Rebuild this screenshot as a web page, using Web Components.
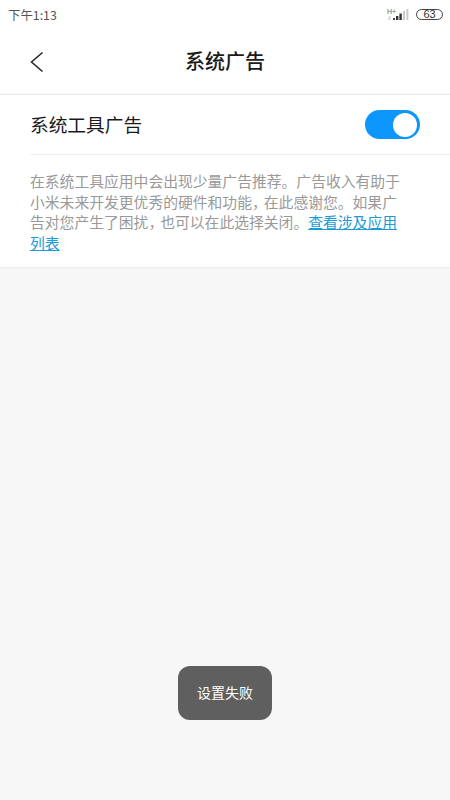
<!DOCTYPE html>
<html lang="zh">
<head>
<meta charset="utf-8">
<title>系统广告</title>
<style>
  html, body { margin: 0; height: 100%; background: #f7f7f7; }
  body { font-family: "Noto Sans CJK SC", "Liberation Sans", sans-serif; }
</style>
</head>
<body>
<ad-screen>
  <status-bar time="下午1:13" battery="63"></status-bar>
  <title-bar>系统广告</title-bar>
  <ad-setting label="系统工具广告">在系统工具应用中会出现少量广告推荐。广告收入有助于<br>小米未来开发更优秀的硬件和功能<span style="letter-spacing:-3px">，</span>在此感谢您。如果广<br>告对您产生了困扰<span style="letter-spacing:-3px">，</span>也可以在此选择关闭。<a href="#">查看涉及应用<br>列表</a></ad-setting>
  <toast-message>设置失败</toast-message>
</ad-screen>

<script>
// page frame, toast sits over it
class AdScreen extends HTMLElement {
  constructor() {
    super();
    this.attachShadow({ mode: 'open' });
    this.shadowRoot.innerHTML = `
      <style>
        :host {
          display: flex;
          flex-direction: column;
          position: relative;
          width: 450px;
          height: 800px;
          overflow: hidden;
          background: #f7f7f7;
        }
      </style>
      <slot></slot>
    `;
  }
}

class StatusBar extends HTMLElement {
  constructor() {
    super();
    this.attachShadow({ mode: 'open' });
  }
  connectedCallback() {
    this.shadowRoot.innerHTML = `
      <style>
        :host {
          display: flex;
          align-items: center;
          justify-content: space-between;
          height: 30px;
          padding: 0 7px 0 8px;
          background: #fff;
          color: #555;
        }
        .time { font-size: 12.4px; line-height: 30px; }
        .right { display: flex; align-items: center; gap: 6px; margin-top: -1px; }
        .batt {
          box-sizing: border-box;
          width: 27px;
          height: 11px;
          border: 1px solid #444;
          border-radius: 5.5px;
          font: 11px/9px "Liberation Sans", sans-serif;
          text-align: center;
          color: #333;
        }
        svg { display: block; }
      </style>
      <span class="time">${this.getAttribute('time')}</span>
      <div class="right">
        <svg width="24" height="16" viewBox="0 0 24 16">
          <text x="1" y="6.5" font-family="Liberation Sans, sans-serif" font-size="7" fill="#666">H+</text>
          <text x="1" y="13" font-family="Liberation Sans, sans-serif" font-size="5" fill="#aaa">.il</text>
          <rect x="7" y="11" width="2" height="2" fill="#444"/>
          <rect x="10" y="9" width="2.4" height="4" fill="#333"/>
          <rect x="13.4" y="6.5" width="2.4" height="6.5" fill="#333"/>
          <rect x="17" y="4" width="2" height="9" fill="#ccc"/>
          <rect x="20.4" y="2" width="2" height="11" fill="#ccc"/>
        </svg>
        <span class="batt">${this.getAttribute('battery')}</span>
      </div>
    `;
  }
}

class TitleBar extends HTMLElement {
  constructor() {
    super();
    this.attachShadow({ mode: 'open' });
    this.shadowRoot.innerHTML = `
      <style>
        :host {
          display: grid;
          grid-template-columns: 75px 1fr 75px;
          align-items: center;
          box-sizing: border-box;
          height: 65px;
          background: #fff;
          border-bottom: 1px solid #e6e6e6;
        }
        .back { padding-left: 30px; height: 22px; margin-top: -1px; }
        svg { display: block; }
        .title {
          text-align: center;
          font-size: 20px;
          line-height: 24px;
          font-weight: 500;
          color: #1a1a1a;
          padding-bottom: 3px;
        }
      </style>
      <div class="back">
        <svg width="14" height="22" viewBox="0 0 14 22" fill="none">
          <path d="M12.5 1.5 L1.5 11 L12.5 20.5" stroke="#222" stroke-width="1.5"/>
        </svg>
      </div>
      <div class="title"><slot></slot></div>
      <div></div>
    `;
  }
}

class ToggleSwitch extends HTMLElement {
  constructor() {
    super();
    this.attachShadow({ mode: 'open' });
    this.shadowRoot.innerHTML = `
      <style>
        :host {
          display: flex;
          justify-content: flex-end;
          align-items: center;
          box-sizing: border-box;
          width: 55px;
          height: 29px;
          padding: 2px 3px;
          border-radius: 15px;
          background: #0d96fb;
        }
        i { display: block; width: 24px; height: 24px; border-radius: 50%; background: #fff; }
      </style>
      <i></i>
    `;
  }
}

class AdSetting extends HTMLElement {
  constructor() {
    super();
    this.attachShadow({ mode: 'open' });
  }
  connectedCallback() {
    this.shadowRoot.innerHTML = `
      <style>
        :host {
          display: block;
          background: #fff;
          border-bottom: 1px solid #eeeeee;
        }
        .row {
          display: flex;
          align-items: center;
          justify-content: space-between;
          box-sizing: border-box;
          height: 60px;
          margin-left: 30px;
          padding-right: 30px;
          border-bottom: 1px solid #efefef;
        }
        .label { font-size: 18.7px; line-height: 24px; color: #1a1a1a; padding-bottom: 2px; }
        /* Liberation first: keeps the inline boxes shorter than the 20.5px lines */
        .desc {
          padding: 17px 46px 13px 30px;
          font-family: "Liberation Sans", "Noto Sans CJK SC", sans-serif;
          font-size: 14.8px;
          line-height: 20.5px;
          color: #999;
        }
        ::slotted(a) { color: #1a9ad6; text-decoration: underline; }
      </style>
      <div class="row">
        <span class="label">${this.getAttribute('label')}</span>
        <toggle-switch></toggle-switch>
      </div>
      <div class="desc"><slot></slot></div>
    `;
  }
}

class ToastMessage extends HTMLElement {
  constructor() {
    super();
    this.attachShadow({ mode: 'open' });
    this.shadowRoot.innerHTML = `
      <style>
        :host {
          position: absolute;
          left: 178px;
          top: 666px;
          display: flex;
          align-items: center;
          justify-content: center;
          box-sizing: border-box;
          width: 94px;
          height: 54px;
          padding-bottom: 2px;
          border-radius: 12px;
          background: #5f5f5f;
          color: #fff;
          font-size: 14px;
        }
      </style>
      <slot></slot>
    `;
  }
}

customElements.define('ad-screen', AdScreen);
customElements.define('status-bar', StatusBar);
customElements.define('title-bar', TitleBar);
customElements.define('toggle-switch', ToggleSwitch);
customElements.define('ad-setting', AdSetting);
customElements.define('toast-message', ToastMessage);
</script>
</body>
</html>
